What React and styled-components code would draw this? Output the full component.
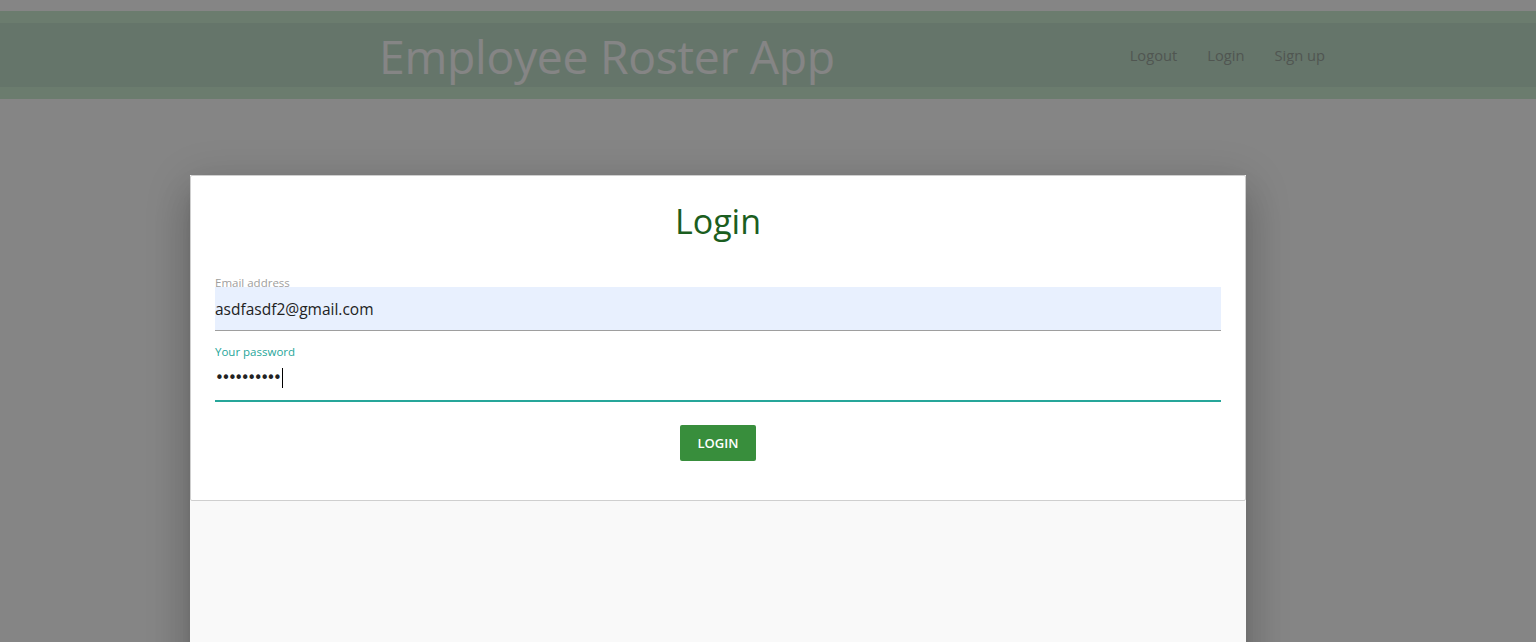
import React from "react";
import styled, { createGlobalStyle } from "styled-components";

const Global = createGlobalStyle`
  html, body { margin: 0; padding: 0; height: 100%; overflow: hidden; background: #fff; }
  body { font-family: "Open Sans", "Noto Sans", sans-serif; }
  * { box-sizing: border-box; }
`;

const Page = styled.div`
  min-height: 642px;
  background: #ffffff;
  padding-top: 11px;
`;

const NavWrap = styled.header`
  background: #ceedd4;
  padding: 12px 0;
`;

const Nav = styled.nav`
  height: 64px;
  background: #c2e1cc;
  display: flex;
  align-items: center;
  padding: 0 196px 0 379px;
`;

const Brand = styled.a`
  flex: 1;
  color: #ffffff;
  font-size: 46.3px;
  font-weight: 400;
  letter-spacing: -0.3px;
  text-decoration: none;
  line-height: 60px;
  padding-top: 4px;
`;

const NavLinks = styled.ul`
  display: flex;
  list-style: none;
  margin: 0;
  padding: 0;
`;

const NavLink = styled.li`
  padding: 0 15px;
  font-size: 14.7px;
  color: #9aa59c;
`;

const Overlay = styled.div`
  position: fixed;
  inset: 0;
  background: rgba(0, 0, 0, 0.48);
`;

const Modal = styled.div`
  position: fixed;
  top: 175px;
  left: 190px;
  width: 1056px;
  height: 560px;
  background: #f9f9f9;
  box-shadow: 0 24px 38px 3px rgba(0, 0, 0, 0.14), 0 9px 46px 8px rgba(0, 0, 0, 0.12),
    0 11px 15px -7px rgba(0, 0, 0, 0.2);
`;

const Card = styled.div`
  background: #ffffff;
  border: 1px solid #cfcfcf;
  border-radius: 2px;
  padding: 22px 24px 39px;
`;

const Heading = styled.h4`
  margin: 0 0 32px;
  text-align: center;
  color: #1b5e20;
  font-size: 34px;
  font-weight: 400;
  line-height: 46px;
`;

const Field = styled.div`
  display: flex;
  flex-direction: column;
  margin-bottom: ${(p) => p.$mb || 0}px;
`;

const Label = styled.label`
  font-size: 11.5px;
  line-height: 13px;
  height: 11px;
  color: ${(p) => (p.$active ? "#26a69a" : "#9e9e9e")};
  position: relative;
  z-index: 1;
`;

const InputBox = styled.div`
  height: ${(p) => (p.$active ? 46 : 44)}px;
  display: flex;
  align-items: center;
  font-size: 15.5px;
  color: #222;
  background: ${(p) => (p.$filled ? "#e8f0fe" : "transparent")};
  border-bottom: ${(p) => (p.$active ? "2px solid #26a69a" : "1px solid #9e9e9e")};
`;

const Dots = styled.span`
  letter-spacing: -2.4px;
  font-size: 15px;
  font-family: "DejaVu Sans", sans-serif;
`;

const Caret = styled.span`
  display: inline-block;
  width: 1px;
  height: 20px;
  background: #000;
  margin-left: 3px;
`;

const ButtonRow = styled.div`
  display: flex;
  justify-content: center;
  margin-top: 23px;
`;

const Button = styled.button`
  width: 76px;
  height: 36px;
  border: none;
  border-radius: 2px;
  background: #388e3c;
  color: #fff;
  font-family: "Open Sans", sans-serif;
  font-size: 13px;
  font-weight: 600;
  letter-spacing: 0;
  padding: 0;
`;

export default function App() {
  return (
    <>
      <Global />
      <Page>
        <NavWrap>
          <Nav>
            <Brand>Employee Roster App</Brand>
            <NavLinks>
              <NavLink>Logout</NavLink>
              <NavLink>Login</NavLink>
              <NavLink>Sign up</NavLink>
            </NavLinks>
          </Nav>
        </NavWrap>
      </Page>
      <Overlay />
      <Modal>
        <Card>
          <Heading>Login</Heading>
          <Field $mb={14}>
            <Label>Email address</Label>
            <InputBox $filled>asdfasdf2@gmail.com</InputBox>
          </Field>
          <Field>
            <Label $active>Your password</Label>
            <InputBox $active>
              <Dots>••••••••••</Dots>
              <Caret />
            </InputBox>
          </Field>
          <ButtonRow>
            <Button>LOGIN</Button>
          </ButtonRow>
        </Card>
      </Modal>
    </>
  );
}
